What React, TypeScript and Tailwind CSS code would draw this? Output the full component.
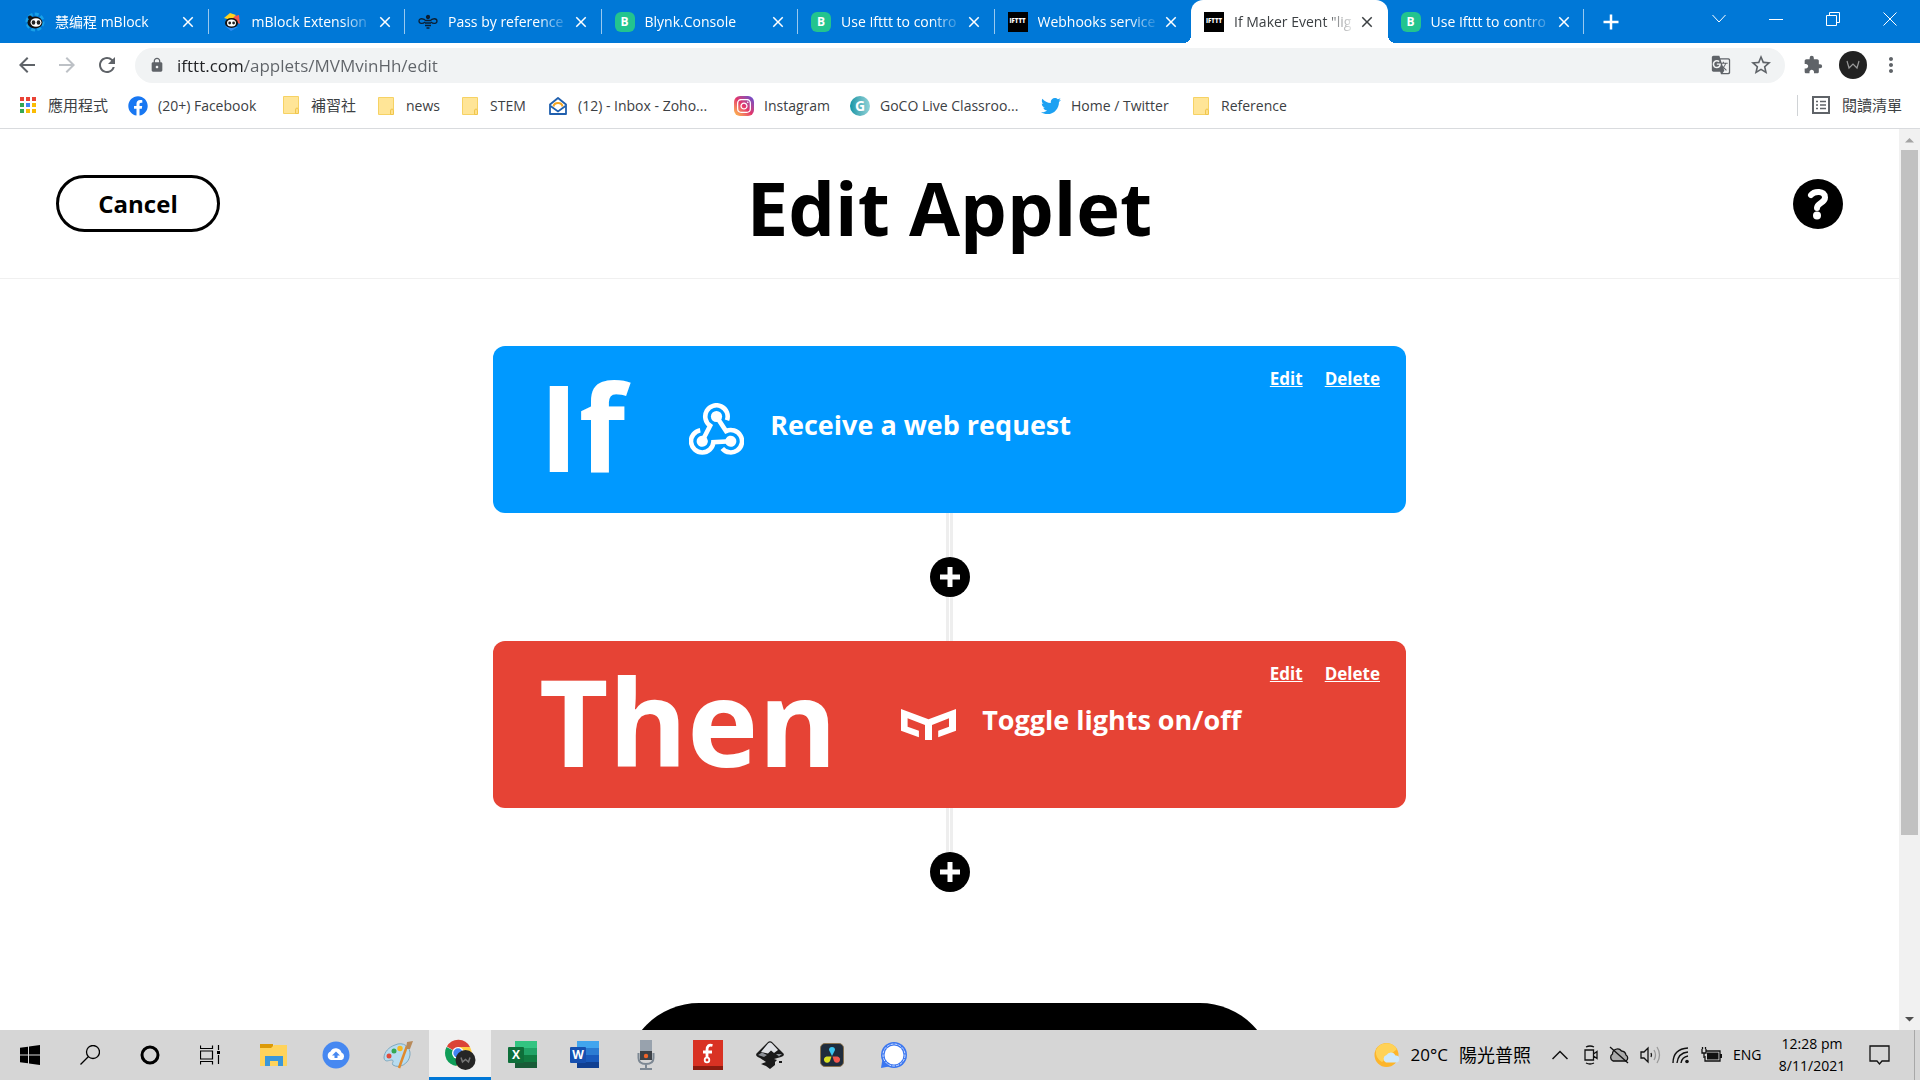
import { useState } from 'react';
import type { ReactNode } from 'react';
import { FaFacebook, FaTwitter, FaInstagram } from 'react-icons/fa';
import { MdArrowBack, MdArrowForward, MdClose, MdExtension, MdGTranslate, MdLock, MdMoreVert, MdRefresh, MdStarBorder } from 'react-icons/md';

interface Tab {
  title: string;
  icon: ReactNode;
  active?: boolean;
}

interface Bookmark {
  label: string;
  icon: ReactNode;
  className: string;
}

function PandaIcon({ color }: { color: string }) {
  return (
    <svg viewBox="0 0 20 20" className="size-5">
      <circle cx="10" cy="10" r="8" fill="none" stroke={color} strokeWidth="3" strokeDasharray="4 2.2" />
      <ellipse cx="10" cy="10.5" rx="7.5" ry="6" fill="#111" />
      <ellipse cx="11" cy="10.5" rx="5.5" ry="4.2" fill="#fff" />
      <ellipse cx="8.5" cy="10.5" rx="1.8" ry="2.2" fill="#222" />
      <ellipse cx="13.5" cy="10.5" rx="1.8" ry="2.2" fill="#222" />
      <circle cx="5" cy="5.500" r="2" fill="#111" />
    </svg>
  );
}

function PandaPartyIcon() {
  return (
    <svg viewBox="0 0 20 20" className="size-5">
      <path d="M8 2 L13 4 L17 3 L18 12 L10 8 Z" fill="#f4554d" />
      <path d="M2 6 L8 1 L14 3 L9 8 Z" fill="#ffd21f" />
      <path d="M3 14 L9 19 L16 15 Z" fill="#2f8df5" />
      <ellipse cx="9.5" cy="11" rx="6.5" ry="5" fill="#111" />
      <ellipse cx="9.5" cy="11" rx="4.5" ry="3.6" fill="#fff" />
      <circle cx="7.7" cy="11" r="1.4" fill="#222" />
      <circle cx="11.6" cy="11" r="1.4" fill="#222" />
    </svg>
  );
}

function BeeIcon() {
  return (
    <svg viewBox="0 0 20 20" className="size-5" fill="none" stroke="#0b1f33" strokeWidth="1.3">
      <path d="M8 9 C6 6 1 6 1 9 C1 12 5 12 7 10 M12 9 C14 6 19 6 19 9 C19 12 15 12 13 10" />
      <path d="M7.500 8.500 h5 M7 11 h6 M7 13.500 h6 M8.500 16 h3" strokeWidth="1.500" />
      <circle cx="10" cy="5" r="1.500" fill="#0b1f33" />
    </svg>
  );
}

function BlynkIcon() {
  return (
    <span className="flex size-5 items-center justify-center rounded-md bg-[#23c48e] text-xs font-bold text-white">B</span>
  );
}

function IftttIcon() {
  return (
    <span className="flex size-5 items-center justify-center bg-black text-[6px] font-extrabold text-white">IFTTT</span>
  );
}

function FolderIcon() {
  return (
    <svg viewBox="0 0 20 20" className="size-5">
      <path d="M2.500 1.500 H17.500 V13 L16 18.500 H2.500 Z" fill="#ffe597" stroke="#f6d264" />
      <path d="M14.500 18.500 V15 Q14.500 13 16 13 Q17.500 13 17.500 15 V18.500 Z" fill="#ffe08a" stroke="#f0c64c" />
    </svg>
  );
}

function AppsIcon() {
  const colors = ['#ea4335', '#ea4335', '#ea4335', '#34a853', '#4285f4', '#fbbc04', '#34a853', '#fbbc04', '#fbbc04'];
  return (
    <svg viewBox="0 0 20 20" className="size-5">
      {colors.map((c, i) => (
        <rect key={i} x={2 + (i % 3) * 6} y={2 + Math.floor(i / 3) * 6} width="4" height="4" fill={c} />
      ))}
    </svg>
  );
}

function ZohoIcon() {
  return (
    <svg viewBox="0 0 20 20" className="size-5" fill="none">
      <path d="M2 8.500 L10 2 L18 8.500 V18 H2 Z" stroke="#1f5fae" strokeWidth="1.8" strokeLinejoin="round" />
      <path d="M2.500 10 L10 15.500 L17.500 10" stroke="#1f5fae" strokeWidth="1.800" />
      <path d="M5.500 10.500 Q6 7 10 7 Q14 7 14.500 10.500" stroke="#f5a623" strokeWidth="2" />
    </svg>
  );
}

function InstagramIcon() {
  return (
    <span className="flex size-5 items-center justify-center rounded-md bg-linear-to-bl from-[#5b3fd6] via-[#e1306c] to-[#ffc23c]">
      <FaInstagram className="size-4 text-white" />
    </span>
  );
}

function GocoIcon() {
  return (
    <span className="flex size-5 items-center justify-center rounded-full bg-linear-to-r from-[#0597a7] to-[#8fd3d8] text-sm font-bold text-white">G</span>
  );
}

const tabs: Tab[] = [
  { title: '慧编程 mBlock', icon: <PandaIcon color="#18a0e8" /> },
  { title: 'mBlock Extension', icon: <PandaPartyIcon /> },
  { title: 'Pass by reference', icon: <BeeIcon /> },
  { title: 'Blynk.Console', icon: <BlynkIcon /> },
  { title: 'Use Ifttt to contro', icon: <BlynkIcon /> },
  { title: 'Webhooks service', icon: <IftttIcon /> },
  { title: 'If Maker Event "lig', icon: <IftttIcon />, active: true },
  { title: 'Use Ifttt to contro', icon: <BlynkIcon /> },
];

const bookmarks: Bookmark[] = [
  { label: '應用程式', icon: <AppsIcon />, className: 'w-[110px] text-[15px]' },
  { label: '(20+) Facebook', icon: <FaFacebook className="size-5 text-[#1877f2]" />, className: 'w-[153px]' },
  { label: '補習社', icon: <FolderIcon />, className: 'w-[95px] text-[15px]' },
  { label: 'news', icon: <FolderIcon />, className: 'w-[84px]' },
  { label: 'STEM', icon: <FolderIcon />, className: 'w-[88px]' },
  { label: '(12) - Inbox - Zoho...', icon: <ZohoIcon />, className: 'w-[186px]' },
  { label: 'Instagram', icon: <InstagramIcon />, className: 'w-[116px]' },
  { label: 'GoCO Live Classroo...', icon: <GocoIcon />, className: 'w-[191px]' },
  { label: 'Home / Twitter', icon: <FaTwitter className="size-5 text-[#1da1f2]" />, className: 'w-[150px]' },
  { label: 'Reference', icon: <FolderIcon />, className: 'w-[120px]' },
];

function TabStrip() {
  return (
    <div className="flex h-[43px] bg-[#0078d7] pl-3 text-white">
      <div className="flex w-[1572px]">
        {tabs.map((tab, i) => (
          <div
            key={i}
            className={
              tab.active
                ? 'relative flex flex-1 items-center rounded-t-xl bg-white pl-[13px] text-[#3c4043]'
                : 'flex flex-1 items-center pl-[13px]'
            }
          >
            {tab.active && (
              <>
                <span className="absolute bottom-0 -left-2 size-2 bg-[radial-gradient(circle_at_0_0,#0078d7_8px,white_8px)]" />
                <span className="absolute -right-2 bottom-0 size-2 bg-[radial-gradient(circle_at_100%_0,#0078d7_8px,white_8px)]" />
              </>
            )}
            {tab.icon}
            <a
              href="#"
              className="ml-[10px] w-[122px] overflow-hidden text-sm whitespace-nowrap [mask-image:linear-gradient(90deg,#000_90px,transparent_122px)]"
            >
              {tab.title}
            </a>
            <button type="button" aria-label="Close tab" className="ml-[2px]">
              <MdClose className="size-[18px]" />
            </button>
            {!tab.active && i !== 5 && <span className="ml-auto h-[25px] w-px bg-white/60" />}
          </div>
        ))}
      </div>
      <button type="button" aria-label="New tab" className="ml-[13px] flex w-7 items-center justify-center">
        <svg viewBox="0 0 16 16" className="size-4" stroke="#fff" strokeWidth="2.5">
          <path d="M8 0.500 V15.500 M0.500 8 H15.500" />
        </svg>
      </button>
      <div className="mr-[2px] ml-auto flex h-[38px]">
        <button type="button" aria-label="Search tabs" className="flex w-[57px] items-center justify-center">
          <svg viewBox="0 0 14 10" className="h-[10px] w-[14px]" fill="none" stroke="#fff"><path d="M0.500 1 L7 8 L13.500 1" /></svg>
        </button>
        <button type="button" aria-label="Minimise" className="flex w-[57px] items-center justify-center">
          <svg viewBox="0 0 14 14" className="size-[14px]" stroke="#fff"><path d="M0 7.500 H14" /></svg>
        </button>
        <button type="button" aria-label="Restore" className="flex w-[57px] items-center justify-center">
          <svg viewBox="0 0 14 14" className="size-[14px]" fill="none" stroke="#fff">
            <path d="M0.500 3.500 H10.500 V13.500 H0.500 Z M3.500 3 V0.500 H13.500 V10.500 H11" />
          </svg>
        </button>
        <button type="button" aria-label="Close" className="flex w-[57px] items-center justify-center">
          <svg viewBox="0 0 14 14" className="size-[14px]" stroke="#fff"><path d="M0.500 0.500 L13.500 13.500 M13.500 0.500 L0.500 13.500" /></svg>
        </button>
      </div>
    </div>
  );
}

function Toolbar() {
  const [url, setUrl] = useState('ifttt.com/applets/MVMvinHh/edit');

  return (
    <div className="flex h-[44px] items-center bg-white pr-[11px] pl-[7px] text-[#5f6368]">
      <button type="button" aria-label="Back" className="flex w-10 justify-center"><MdArrowBack className="size-6" /></button>
      <button type="button" aria-label="Forward" className="flex w-10 justify-center text-[#bdc1c6]"><MdArrowForward className="size-6" /></button>
      <button type="button" aria-label="Reload" className="flex w-10 justify-center"><MdRefresh className="size-6" /></button>
      <div className="ml-2 flex h-[35px] flex-1 items-center rounded-full bg-[#f1f3f4] pr-3 pl-[14px]">
        <MdLock className="size-4" />
        <input
          aria-label="Address"
          value={url}
          onChange={(e) => setUrl(e.target.value)}
          className="ml-3 flex-1 bg-[linear-gradient(90deg,#202124_68px,#5f6368_68px)] bg-clip-text pt-px text-[17px] text-transparent outline-none"
        />
        <button type="button" aria-label="Translate" className="flex w-10 justify-center"><MdGTranslate className="size-5" /></button>
        <button type="button" aria-label="Bookmark" className="-mr-2 flex w-10 justify-center"><MdStarBorder className="size-6" /></button>
      </div>
      <button type="button" aria-label="Extensions" className="ml-2 flex w-10 justify-center"><MdExtension className="size-5" /></button>
      <button type="button" aria-label="Profile" className="flex w-10 justify-center">
        <svg viewBox="0 0 28 28" className="size-7">
          <circle cx="14" cy="14" r="14" fill="#222" />
          <path d="M8 10 L10 17 L14 13 L18 17 L20 10" fill="none" stroke="#999" strokeWidth="1.200" />
        </svg>
      </button>
      <button type="button" aria-label="Menu" className="flex w-9 justify-center"><MdMoreVert className="size-6" /></button>
    </div>
  );
}

function BookmarksBar() {
  return (
    <div className="flex h-[42px] items-center border-b border-[#d9dbde] bg-white px-[18px] pb-1 text-sm text-[#3c4043]">
      {bookmarks.map((b) => (
        <a key={b.label} href="#" className={`flex items-center gap-[10px] whitespace-nowrap ${b.className}`}>
          {b.icon}
          {b.label}
        </a>
      ))}
      <button type="button" className="ml-auto flex items-center gap-3 border-l border-[#d0d3d6] pl-[14px] text-[15px]">
        <svg viewBox="0 0 18 18" className="size-[18px]" fill="none" stroke="#5f6368">
          <rect x="1" y="1" width="16" height="16" strokeWidth="2" />
          <path d="M4 5.500 h2 M8 5.500 h6 M4 9 h2 M8 9 h6 M4 12.500 h2 M8 12.500 h6" strokeWidth="1.5" />
        </svg>
        閱讀清單
      </button>
    </div>
  );
}

function WebhookIcon() {
  const arm = 'M38 17.300 A11.200 11.200 0 1 0 21.100 22.700 L13.200 38.300';
  return (
    <svg viewBox="0 0 55 53" className="h-[53px] w-[55px] shrink-0" fill="none" stroke="#fff" strokeWidth="4.6">
      {[0, 120, 240].map((deg) => (
        <g key={deg} transform={`rotate(${deg} 27.5 30)`}>
          <path d={arm} />
          <circle cx="27.500" cy="13.500" r="5.600" fill="#fff" stroke="none" />
        </g>
      ))}
    </svg>
  );
}

function YeelightIcon() {
  return (
    <svg viewBox="0 0 55 31" className="h-[31px] w-[55px] shrink-0" fill="#fff">
      <path d="M0 0 L27.500 10.300 L55 0 V21.700 L37.200 28.300 V21.700 L48 17.700 V9.300 L31 16 V31 H24 V16 L6.600 9.300 V17.700 L17.900 21.700 V28.300 L0 21.700 Z" />
    </svg>
  );
}

interface StepCardProps {
  word: string;
  label: string;
  icon: ReactNode;
  className: string;
}

function StepCard({ word, label, icon, className }: StepCardProps) {
  return (
    <section className={`flex h-[167px] w-full max-w-[913px] items-center rounded-xl pr-[26px] pl-[46px] text-white ${className}`}>
      <h2 className="pb-2 text-[120px] leading-none font-bold">{word}</h2>
      <div className="ml-16 flex items-center gap-[26px]">
        {icon}
        <p className="pb-2 text-[27px] font-bold">{label}</p>
      </div>
      <div className="ml-auto flex gap-[22px] self-start pt-5 text-[17px] font-bold">
        <a href="#" className="underline">Edit</a>
        <a href="#" className="underline">Delete</a>
      </div>
    </section>
  );
}

function AddStep() {
  return (
    <button type="button" aria-label="Add step" className="flex size-10 items-center justify-center rounded-full bg-black">
      <svg viewBox="0 0 20 20" className="size-5" stroke="#fff" strokeWidth="5">
        <path d="M10 0 V20 M0 10 H20" />
      </svg>
    </button>
  );
}

function Line() {
  return <span className="h-11 w-[7px] border-x-[3px] border-[#eee]" />;
}

function AppletEditor() {
  return (
    <div className="flex min-h-0 flex-1 bg-white text-black">
      <main className="min-w-0 flex-1 overflow-hidden">
        <header className="grid h-[150px] grid-cols-3 items-center border-b border-[#f0f0f0] px-14">
          <button type="button" className="h-[57px] w-[164px] justify-self-start rounded-full border-[3px] border-black text-2xl font-bold">
            Cancel
          </button>
          <h1 className="justify-self-center pt-2 text-[74px] leading-none font-bold whitespace-nowrap">Edit Applet</h1>
          <button type="button" aria-label="Help" className="justify-self-end">
            <svg viewBox="0 0 50 50" className="size-[50px]">
              <circle cx="25" cy="25" r="25" />
              <path d="M18 16 C21 12 32 11 32 18.500 C32 24 24 24 24 29" fill="none" stroke="#fff" strokeWidth="6" strokeLinecap="round" />
              <circle cx="24" cy="36.500" r="4" fill="#fff" />
            </svg>
          </button>
        </header>
        <div className="flex flex-col items-center pt-[67px]">
          <StepCard word="If" label="Receive a web request" icon={<WebhookIcon />} className="bg-[#0099ff]" />
          <Line />
          <AddStep />
          <Line />
          <StepCard word="Then" label="Toggle lights on/off" icon={<YeelightIcon />} className="bg-[#e64335]" />
          <Line />
          <AddStep />
          <button type="button" aria-label="Continue" className="mt-[111px] h-[148px] w-[649px] shrink-0 rounded-full bg-black" />
        </div>
      </main>
      <div className="flex w-[21px] flex-col items-center bg-[#f1f1f1]">
        <svg viewBox="0 0 21 21" className="size-[21px]" fill="#a3a3a3"><path d="M6 13.500 L10.500 9 L15 13.500 Z" /></svg>
        <div className="h-[685px] w-[17px] bg-[#c1c1c1]" />
        <svg viewBox="0 0 21 21" className="mt-auto size-[21px]" fill="#505050"><path d="M6 8 L10.500 12.500 L15 8 Z" /></svg>
      </div>
    </div>
  );
}

function ChromeIcon() {
  return (
    <svg viewBox="0 0 32 32" className="size-8">
      <path d="M14 15 L2.900 8.500 A13 13 0 0 1 26 9 L14 9 Z" fill="#db4437" />
      <path d="M14 15 L2.500 9 A13 13 0 0 0 12.500 28 L19 18 Z" fill="#0f9d58" />
      <path d="M14 9 H26 A13 13 0 0 1 12.500 28 L19 18 Z" fill="#ffcd40" />
      <circle cx="14" cy="15" r="6" fill="#fff" />
      <circle cx="14" cy="15" r="4.700" fill="#4285f4" />
      <circle cx="21.500" cy="22" r="10" fill="#252525" />
      <path d="M17 19.500 L18.500 24 L21.500 21.500 L24.500 24 L26 19.500" fill="none" stroke="#777" strokeWidth="1.500" />
    </svg>
  );
}

function OfficeIcon({ letter, colors }: { letter: string; colors: string[] }) {
  return (
    <span className="relative flex size-[30px] items-center">
      <svg viewBox="0 0 30 30" className="absolute inset-0 size-[30px]">
        <path d="M8 1 H30 V8 H8 Z" fill={colors[0]} />
        <path d="M8 8 H30 V15 H8 Z" fill={colors[1]} />
        <path d="M8 15 H30 V22 H8 Z" fill={colors[2]} />
        <path d="M8 22 H30 V28 H8 Z" fill={colors[3]} />
        <rect x="1" y="7" width="16" height="16" rx="1" fill={colors[4]} />
      </svg>
      <span className="relative ml-px w-4 text-center text-xs font-bold text-white">{letter}</span>
    </span>
  );
}

const systemIcons: { name: string; icon: ReactNode }[] = [
  {
    name: 'Start',
    icon: (
      <svg viewBox="0 0 20 20" className="size-5">
        <path d="M0 2.800 L8 1.700 V9.500 H0 Z M9 1.500 L20 0 V9.500 H9 Z M0 10.500 H8 V18.300 L0 17.200 Z M9 10.500 H20 V20 L9 18.500 Z" />
      </svg>
    ),
  },
  {
    name: 'Search',
    icon: (
      <svg viewBox="0 0 20 20" className="size-5" fill="none" stroke="#000" strokeWidth="1.300">
        <circle cx="13" cy="7" r="6.500" />
        <path d="M8.500 11.500 L0.500 19.500" />
      </svg>
    ),
  },
  {
    name: 'Cortana',
    icon: (
      <svg viewBox="0 0 20 20" className="size-5" fill="none" stroke="#000" strokeWidth="3">
        <circle cx="10" cy="10" r="8" />
      </svg>
    ),
  },
  {
    name: 'Task View',
    icon: (
      <svg viewBox="0 0 20 20" className="size-5" fill="none" stroke="#000" strokeWidth="1.200">
        <path d="M0.500 0.500 V3.500 H12.500 V0.500 M0.500 6 H12.500 V14 H0.500 Z M0.500 19.500 V16.500 H12.500 V19.500 M18.500 0 V5 M18.500 10 V19" />
        <path d="M17 6 h3 v3 h-3 Z" fill="#000" stroke="none" />
      </svg>
    ),
  },
];

const apps: { name: string; icon: ReactNode; active?: boolean }[] = [
  {
    name: 'File Explorer',
    icon: (
      <svg viewBox="0 0 28 28" className="size-7">
        <path d="M0 3 H13 V10 H0 Z" fill="#dc9a08" />
        <path d="M0 7 H11 L14 4 H27 V25 H0 Z" fill="#ffd35b" />
        <path d="M5 25 V15 H23 V25 H18 V20 H10 V25 Z" fill="#3b97da" />
      </svg>
    ),
  },
  {
    name: 'Backup and Sync',
    icon: (
      <svg viewBox="0 0 28 28" className="size-7">
        <circle cx="14" cy="14" r="13.500" fill="#4688f1" />
        <path d="M9 19 A4.500 4.500 0 0 1 8.500 10.500 A6 6 0 0 1 19.500 11.500 A4 4 0 0 1 19.500 19 Z" fill="#fff" />
        <path d="M14 10.500 L18 14.500 H15.500 V17 H12.500 V14.500 H10 Z" fill="#4688f1" />
      </svg>
    ),
  },
  {
    name: 'Paint',
    icon: (
      <svg viewBox="0 0 30 30" className="size-[30px]">
        <path d="M12 5 C20 1 28 7 27 15 C26 24 16 29 10 25 C8 23 12 21 9 20 C6 20 2 23 1 18 C1 12 6 7 12 5 Z" fill="#b7dcf0" stroke="#7fa9bf" />
        <circle cx="6" cy="16" r="2.500" fill="#e04b3c" />
        <circle cx="11" cy="11" r="2.500" fill="#35a853" />
        <circle cx="17" cy="8.500" r="2.700" fill="#f5b921" />
        <path d="M24 6 L16 28" stroke="#e08a2e" strokeWidth="2.500" />
        <path d="M23 9 L24 2 L30 1 L27 9 Z" fill="#b88a5a" />
      </svg>
    ),
  },
  { name: 'Google Chrome', icon: <ChromeIcon />, active: true },
  { name: 'Excel', icon: <OfficeIcon letter="X" colors={['#33c481', '#21a366', '#107c41', '#185c37', '#0e6f3a']} /> },
  { name: 'Word', icon: <OfficeIcon letter="W" colors={['#41a5ee', '#2b7cd3', '#185abd', '#103f91', '#1650b0']} /> },
  {
    name: 'Voice Recorder',
    icon: (
      <svg viewBox="0 0 18 30" className="h-[30px] w-[18px]">
        <path d="M3 0 H15 V12 H3 Z" fill="#98a2ad" />
        <path d="M3 11 H15 V20 H3 Z" fill="#3c4147" />
        <path d="M1.500 13 V18 Q1.500 24 9 24 Q16.500 24 16.500 18 V13 M9 24 V29 M3 29 H15" fill="none" stroke="#7d8893" strokeWidth="2" />
        <circle cx="9" cy="16" r="2.200" fill="#f0642a" />
      </svg>
    ),
  },
  {
    name: 'Fritzing',
    icon: (
      <svg viewBox="0 0 30 30" className="size-[30px]">
        <path d="M0 0 H30 V30 H0 Z" fill="#d93223" />
        <path d="M0 26 H30 V30 H0 Z" fill="#8a1c10" />
        <path d="M19.500 5.500 Q14 4 14 10 V18 M10 12 H19" fill="none" stroke="#fff" strokeWidth="2.800" />
        <circle cx="14" cy="20" r="2.300" fill="none" stroke="#fff" strokeWidth="1.800" />
      </svg>
    ),
  },
  {
    name: 'Inkscape',
    icon: (
      <svg viewBox="0 0 30 30" className="size-[30px]">
        <path d="M12.500 2.500 Q15 0 17.500 2.500 L28.500 13.500 Q30 16 26 17 L19 19 L22 20 L20 22 L20 25 L15 29 L11 26 L6 24 L11 22 L5 18 Q0 16 1.500 13.500 Z" fill="#1a1a1a" />
        <path d="M24 21 h3 v2 h-3 Z" fill="#1a1a1a" />
        <path d="M13 3.500 Q15 1.500 17 3.500 L23 10 L19 13 L16 10.500 L13 13.500 L6 12 Z" fill="#dfe1e5" />
        <path d="M3 15 L7 12.500 L12 15 L9 17 Z M21 14 L27 14 L24 16.500 Z" fill="#8c9096" />
      </svg>
    ),
  },
  {
    name: 'DaVinci Resolve',
    icon: (
      <svg viewBox="0 0 24 24" className="size-6">
        <rect x="0.500" y="0.500" width="23" height="23" rx="4.500" fill="#1f2c3c" stroke="#88724f" />
        <path d="M12 13 L9 7 A3 3 0 1 1 15 7 Z" fill="#3cc5f0" />
        <path d="M11.500 13.500 L10 18 A3.200 3.200 0 1 1 6.500 13.500 Z" fill="#d9e021" />
        <path d="M12.500 13.500 L14 18 A3.200 3.200 0 1 0 17.500 13.500 Z" fill="#f2564d" />
      </svg>
    ),
  },
  {
    name: 'Signal',
    icon: (
      <svg viewBox="0 0 28 28" className="size-7">
        <circle cx="14" cy="14" r="13" fill="#3a76f0" />
        <path d="M1 27 L2.500 18 L9 25.500 Z" fill="#3a76f0" />
        <circle cx="14" cy="14" r="11" fill="none" stroke="#d6e3ff" strokeDasharray="3 1" />
        <circle cx="14" cy="14" r="9.500" fill="#fff" />
      </svg>
    ),
  },
];

function Tray() {
  return (
    <div className="ml-auto flex items-center pr-[5px] text-black">
      <button type="button" className="flex items-center gap-[11px]">
        <svg viewBox="0 0 26 26" className="size-[26px]">
          <circle cx="12.500" cy="13" r="12" fill="#fdb52b" />
          <path d="M2 8 A12 12 0 0 1 23 7 L8 20 A12 12 0 0 1 2 8 Z" fill="#ffd257" />
          <path d="M12 20.500 A4 4 0 0 1 12.500 13 A5 5 0 0 1 21.500 13.500 A3.500 3.500 0 0 1 22 20.500 Z" fill="#cfe9fb" />
        </svg>
        <span className="text-[17px]">20°C</span>
        <span className="text-lg">陽光普照</span>
      </button>
      <button type="button" aria-label="Hidden icons" className="ml-[21px]">
        <svg viewBox="0 0 16 10" className="h-[10px] w-4" fill="none" stroke="#111" strokeWidth="1.500"><path d="M0.500 9 L8 1.500 L15.500 9" /></svg>
      </button>
      <div className="ml-4 flex items-center gap-[11px]">
        <svg viewBox="0 0 14 20" className="h-5 w-[14px]" fill="none" stroke="#111" strokeWidth="1.300">
          <path d="M1 5 H9.500 V15 H1 Z M9.500 9 L13 6.500 V13.500 L9.500 11 M2 2 Q6 0 10 2 M2 18 Q6 20 10 18" />
        </svg>
        <svg viewBox="0 0 20 18" className="h-[18px] w-5" fill="none" stroke="#111" strokeWidth="1.300">
          <path d="M4 15 A4 4 0 0 1 3.500 8 A5 5 0 0 1 12.500 5 A5 5 0 0 1 17 9 A3.500 3.500 0 0 1 17 15 Z" fill="#aaa" />
          <path d="M1 1 L19 17" />
        </svg>
        <svg viewBox="0 0 21 20" className="h-5 w-[21px]" fill="none" stroke="#111" strokeWidth="1.300">
          <path d="M1 7 H4 L8 3 V17 L4 13 H1 Z M11 8 Q12 10 11 12" />
          <path d="M14 5 Q17 10 14 15 M17 2 Q22 10 17 18" stroke="#999" />
        </svg>
        <svg viewBox="0 0 18 18" className="size-[18px]" fill="none" stroke="#111" strokeWidth="1.400">
          <path d="M1 17 Q1 3 16 2 M5 17 Q6 7 16 6 M9 17 Q10 11 16 10" />
          <circle cx="15" cy="15.500" r="1.800" fill="#111" stroke="none" />
        </svg>
        <svg viewBox="0 0 21 16" className="h-4 w-[21px]" fill="none" stroke="#111" strokeWidth="1.300">
          <path d="M5 4 H19 V14 H4 V9" />
          <path d="M6 5.500 H17.500 V12.500 H6 Z M19 7 H21 V11 H19 Z" fill="#111" stroke="none" />
          <path d="M1 2 V6 H5 V2 M3 6 V11 M1.500 0 V2 M4.500 0 V2" />
        </svg>
      </div>
      <span className="ml-[11px] w-[30px] text-sm">ENG</span>
      <div className="ml-[14px] w-[70px] text-center text-sm leading-[22px] whitespace-nowrap">
        <p>12:28 pm</p>
        <p>8/11/2021</p>
      </div>
      <button type="button" aria-label="Notifications" className="ml-[22px]">
        <svg viewBox="0 0 21 21" className="size-[21px]" fill="none" stroke="#111" strokeWidth="1.300">
          <path d="M1 1 H20 V16 H13 L10.500 19 L8 16 H1 Z" />
        </svg>
      </button>
      <span className="ml-6 h-[50px] w-px bg-[#a8a8a8]" />
    </div>
  );
}

function Taskbar() {
  return (
    <footer className="flex h-[50px] shrink-0 items-center bg-[#d6d6d6]">
      {systemIcons.map((item) => (
        <button key={item.name} type="button" aria-label={item.name} className="flex h-full w-[60px] items-center justify-center">
          {item.icon}
        </button>
      ))}
      <div className="ml-[3px] flex h-full">
        {apps.map((app) => (
          <button
            key={app.name}
            type="button"
            aria-label={app.name}
            className={
              app.active
                ? 'flex h-full w-[62px] items-center justify-center border-b-[3px] border-[#0078d7] bg-[#f0f0f0]'
                : 'flex h-full w-[62px] items-center justify-center'
            }
          >
            {app.icon}
          </button>
        ))}
      </div>
      <Tray />
    </footer>
  );
}

export default function App() {
  return (
    <div className="flex h-screen flex-col overflow-hidden bg-white font-['Open_Sans','Noto_Sans_CJK_TC',sans-serif]">
      <TabStrip />
      <Toolbar />
      <BookmarksBar />
      <AppletEditor />
      <Taskbar />
    </div>
  );
}
